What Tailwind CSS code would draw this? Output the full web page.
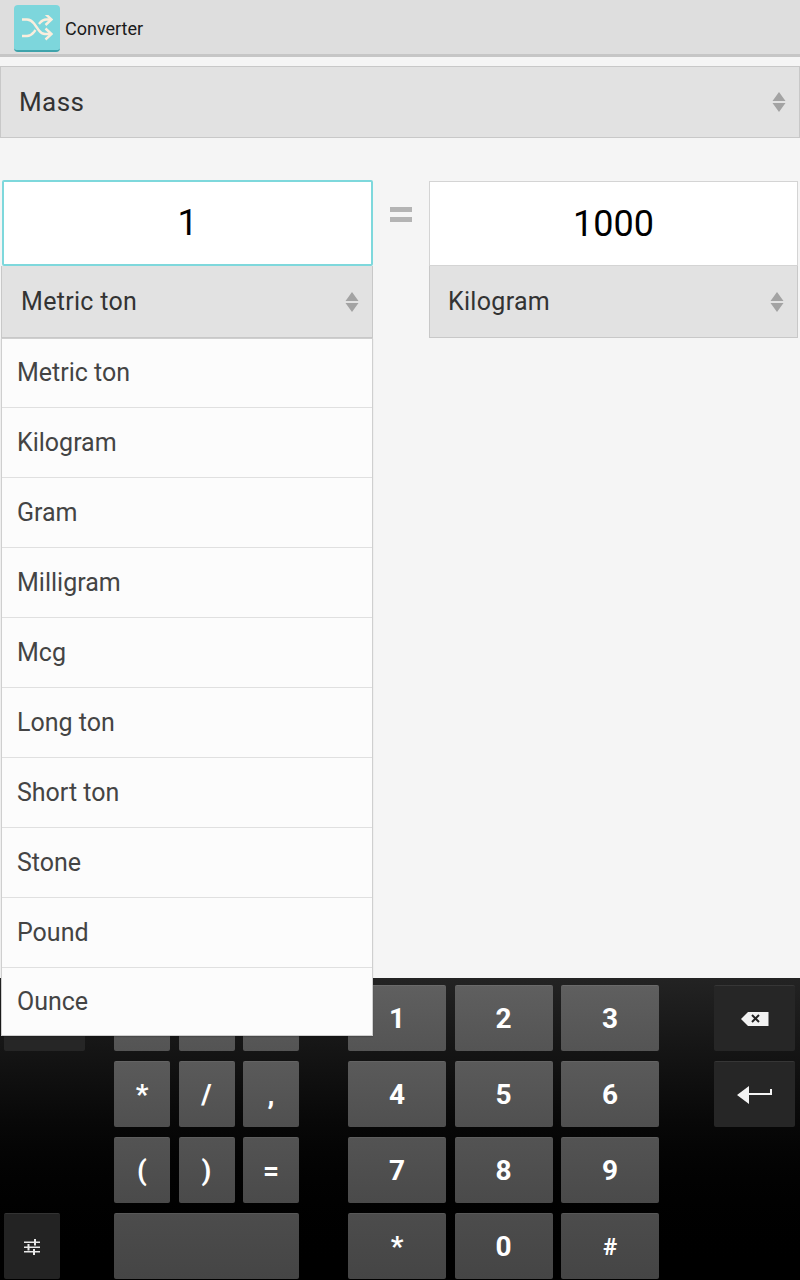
<!doctype html>
<html>
<head>
<meta charset="utf-8">
<script src="https://cdn.jsdelivr.net/npm/@tailwindcss/browser@4"></script>
</head>
<body class="m-0">
<div class="relative w-[800px] h-[1280px] overflow-hidden flex flex-col bg-[#f5f5f5] font-['Roboto',sans-serif]">
  <!-- Action bar -->
  <header class="h-[57px] shrink-0 flex items-start bg-[#dedede] border-b-[3px] border-[#c6c6c6]">
    <div class="ml-[14px] mt-[5px] w-[46px] h-[47px] rounded-[4px] bg-[#7dd6dc] border-b-2 border-[#3fa3ab] flex items-center justify-center">
      <svg width="32" height="26" viewBox="0 0 32 26" fill="none" stroke="#fbeedd" stroke-width="2.4">
        <path d="M1 4.5h5c3 0 5 1.5 7 4l5 7c1.6 2.2 3.5 3.5 6 3.5h6"/>
        <path d="M1 21h5c3 0 5-1.5 7-4l1.5-2M18 9l1-1.2C21 5.500 23 4.500 25 4.500h5"/>
        <path d="M24.500 -1 30.500 4.500 24.500 10M24.500 13.500l6 5.500-6 5.500"/>
      </svg>
    </div>
    <span class="ml-[5px] mt-[17px] text-[18px] leading-[24px] text-[#1a1a1a]">Converter</span>
  </header>

  <main class="flex-1 min-h-0">
    <!-- Category spinner -->
    <div class="mt-[9px] h-[72px] flex items-center justify-between bg-[#e2e2e2] border border-[#c8c8c8] pl-[18px] pr-[13px]">
      <span class="text-[26px] tracking-[0.4px] text-[#333333]">Mass</span>
      <svg width="14" height="20" viewBox="0 0 14 20" fill="#a3a3a3"><path d="M7 0l6.500 9H.5zM.5 11h13L7 20z"/></svg>
    </div>

    <!-- Converter columns -->
    <div class="mt-[42px] flex items-start">
      <div class="ml-[1px] w-[372px] flex flex-col">
        <div class="ml-[1px] h-[86px] flex items-center justify-center bg-white border-2 border-[#7ed8dc] rounded-[2px] text-[36px] text-black">1</div>
        <div class="h-[72px] flex items-center justify-between bg-[#e2e2e2] border border-t-0 border-[#c8c8c8] pl-[19px] pr-[13px]">
          <span class="text-[25px] tracking-[0.3px] text-[#333333]">Metric ton</span>
          <svg width="14" height="20" viewBox="0 0 14 20" fill="#a3a3a3"><path d="M7 0l6.500 9H.5zM.5 11h13L7 20z"/></svg>
        </div>
      </div>
      <div class="w-[56px] pt-[27px] flex justify-center">
        <div class="w-[22px] flex flex-col gap-[5px]">
          <div class="h-[5px] bg-[#b4b4b4]"></div>
          <div class="h-[5px] bg-[#b4b4b4]"></div>
        </div>
      </div>
      <div class="w-[369px] mt-[1px] flex flex-col">
        <div class="h-[85px] flex items-center justify-center bg-white border border-[#d4d4d4] text-[36px] text-black">1000</div>
        <div class="h-[72px] flex items-center justify-between bg-[#e2e2e2] border border-t-0 border-[#c8c8c8] pl-[18px] pr-[13px]">
          <span class="text-[25px] tracking-[0.3px] text-[#333333]">Kilogram</span>
          <svg width="14" height="20" viewBox="0 0 14 20" fill="#a3a3a3"><path d="M7 0l6.500 9H.5zM.5 11h13L7 20z"/></svg>
        </div>
      </div>
    </div>
  </main>

  <!-- Keyboard -->
  <div class="h-[302px] shrink-0 flex pt-[7px] bg-gradient-to-b from-[#232323] to-black text-white font-bold">
    <div class="ml-[4px] w-[81px] grid grid-rows-[repeat(4,66px)] gap-y-[10px]">
      <div class="rounded-[2px] bg-[#262626] border-t border-[#363636]"></div>
      <div></div>
      <div></div>
      <div class="w-[56px] rounded-[2px] bg-[#232323] border-t border-[#333333] flex items-center justify-center">
        <svg width="18" height="18" viewBox="0 0 18 18" fill="#e8e8e8">
          <path d="M1 3.500h16v1.500H1zM1 8.500h16V10H1zM1 13h16v1.500H1z"/>
          <path d="M11 1h2v6.500h-2zM4.500 6h2v6.500h-2zM10 11h2v6h-2z"/>
        </svg>
      </div>
    </div>
    <div class="ml-[29px] w-[185px] grid grid-cols-[56px_56px_56px] grid-rows-[repeat(4,66px)] gap-x-[8.5px] gap-y-[10px] text-[28px]">
      <div class="rounded-[2px] bg-gradient-to-b from-[#5f5f5f] to-[#545454] border-t border-[#6a6a6a]"></div>
      <div class="rounded-[2px] bg-gradient-to-b from-[#5f5f5f] to-[#545454] border-t border-[#6a6a6a]"></div>
      <div class="rounded-[2px] bg-gradient-to-b from-[#5f5f5f] to-[#545454] border-t border-[#6a6a6a]"></div>
      <div class="rounded-[2px] bg-gradient-to-b from-[#5a5a5a] to-[#505050] border-t border-[#646464] flex items-center justify-center">*</div>
      <div class="rounded-[2px] bg-gradient-to-b from-[#5a5a5a] to-[#505050] border-t border-[#646464] flex items-center justify-center">/</div>
      <div class="rounded-[2px] bg-gradient-to-b from-[#5a5a5a] to-[#505050] border-t border-[#646464] flex items-center justify-center">,</div>
      <div class="rounded-[2px] bg-gradient-to-b from-[#535353] to-[#4a4a4a] border-t border-[#5e5e5e] flex items-center justify-center">(</div>
      <div class="rounded-[2px] bg-gradient-to-b from-[#535353] to-[#4a4a4a] border-t border-[#5e5e5e] flex items-center justify-center">)</div>
      <div class="rounded-[2px] bg-gradient-to-b from-[#535353] to-[#4a4a4a] border-t border-[#5e5e5e] flex items-center justify-center">=</div>
      <div class="col-span-3 rounded-[2px] bg-gradient-to-b from-[#4c4c4c] to-[#454545] border-t border-[#585858]"></div>
    </div>
    <div class="ml-[49px] w-[311px] grid grid-cols-[98px_98px_98px] grid-rows-[repeat(4,66px)] gap-x-[8.5px] gap-y-[10px] text-[28px]">
      <div class="rounded-[2px] bg-gradient-to-b from-[#5f5f5f] to-[#545454] border-t border-[#6a6a6a] flex items-center justify-center">1</div>
      <div class="rounded-[2px] bg-gradient-to-b from-[#5f5f5f] to-[#545454] border-t border-[#6a6a6a] flex items-center justify-center">2</div>
      <div class="rounded-[2px] bg-gradient-to-b from-[#5f5f5f] to-[#545454] border-t border-[#6a6a6a] flex items-center justify-center">3</div>
      <div class="rounded-[2px] bg-gradient-to-b from-[#5a5a5a] to-[#505050] border-t border-[#646464] flex items-center justify-center">4</div>
      <div class="rounded-[2px] bg-gradient-to-b from-[#5a5a5a] to-[#505050] border-t border-[#646464] flex items-center justify-center">5</div>
      <div class="rounded-[2px] bg-gradient-to-b from-[#5a5a5a] to-[#505050] border-t border-[#646464] flex items-center justify-center">6</div>
      <div class="rounded-[2px] bg-gradient-to-b from-[#535353] to-[#4a4a4a] border-t border-[#5e5e5e] flex items-center justify-center">7</div>
      <div class="rounded-[2px] bg-gradient-to-b from-[#535353] to-[#4a4a4a] border-t border-[#5e5e5e] flex items-center justify-center">8</div>
      <div class="rounded-[2px] bg-gradient-to-b from-[#535353] to-[#4a4a4a] border-t border-[#5e5e5e] flex items-center justify-center">9</div>
      <div class="rounded-[2px] bg-gradient-to-b from-[#4c4c4c] to-[#454545] border-t border-[#585858] flex items-center justify-center">*</div>
      <div class="rounded-[2px] bg-gradient-to-b from-[#4c4c4c] to-[#454545] border-t border-[#585858] flex items-center justify-center">0</div>
      <div class="rounded-[2px] bg-gradient-to-b from-[#4c4c4c] to-[#454545] border-t border-[#585858] flex items-center justify-center text-[24px]">#</div>
    </div>
    <div class="ml-[55px] w-[81px] grid grid-rows-[repeat(4,66px)] gap-y-[10px]">
      <div class="rounded-[2px] bg-[#262626] border-t border-[#363636] flex items-center justify-center">
        <svg width="28" height="14" viewBox="0 0 28 14"><path d="M0 7 7 0h20.500v14H7z" fill="#f2f2f2"/><path d="M11 3l7 7M18 3l-7 7" stroke="#222" stroke-width="2"/></svg>
      </div>
      <div class="rounded-[2px] bg-[#262626] border-t border-[#363636] flex items-center justify-center">
        <svg width="36" height="20" viewBox="0 0 36 20" fill="#f4f4f4"><path d="M0 10 12 1v7h21V4h2v6H12v9z"/></svg>
      </div>
    </div>
  </div>

  <!-- Open dropdown list -->
  <ul class="absolute left-[1px] top-[338px] w-[372px] h-[698px] bg-[#fcfcfc] border border-[#cfcfcf] text-[25px] text-[#444444] shadow-[0_1px_1px_rgba(0,0,0,0.15)]">
    <li class="h-[69px] flex items-center pl-[15px] border-b border-[#e0e0e0]">Metric ton</li>
    <li class="h-[70px] flex items-center pl-[15px] border-b border-[#e0e0e0]">Kilogram</li>
    <li class="h-[70px] flex items-center pl-[15px] border-b border-[#e0e0e0]">Gram</li>
    <li class="h-[70px] flex items-center pl-[15px] border-b border-[#e0e0e0]">Milligram</li>
    <li class="h-[70px] flex items-center pl-[15px] border-b border-[#e0e0e0]">Mcg</li>
    <li class="h-[70px] flex items-center pl-[15px] border-b border-[#e0e0e0]">Long ton</li>
    <li class="h-[70px] flex items-center pl-[15px] border-b border-[#e0e0e0]">Short ton</li>
    <li class="h-[70px] flex items-center pl-[15px] border-b border-[#e0e0e0]">Stone</li>
    <li class="h-[70px] flex items-center pl-[15px] border-b border-[#e0e0e0]">Pound</li>
    <li class="h-[68px] flex items-center pl-[15px]">Ounce</li>
  </ul>
</div>
</body>
</html>
